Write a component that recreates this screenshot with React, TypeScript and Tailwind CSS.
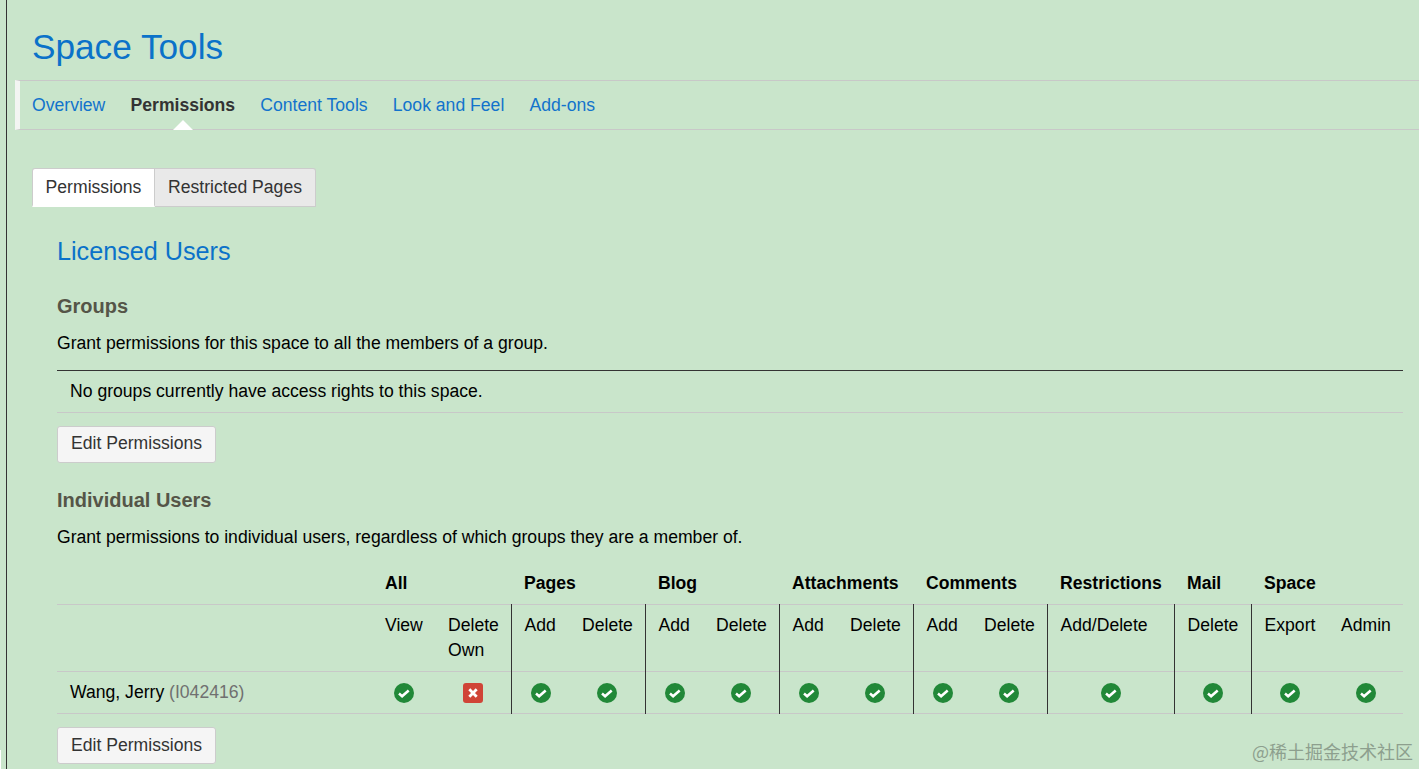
const Check = () => (
  <svg width="20" height="20" viewBox="0 0 20 20" className="mx-auto block">
    <circle cx="10" cy="10" r="10" fill="#218838" />
    <path d="M5 10.6l3.1 2.6 6.6-5.6" fill="none" stroke="#fff" strokeWidth="2.6" />
  </svg>
);
const Cross = () => (
  <svg width="20" height="20" viewBox="0 0 20 20" className="mx-auto block">
    <rect width="20" height="20" rx="3" fill="#d04437" />
    <path d="M6.3 6.3l7.4 7.4M13.7 6.3l-7.4 7.4" fill="none" stroke="#fff" strokeWidth="2.8" />
  </svg>
);

const headers: [string, number][] = [
  ["All", 2],
  ["Pages", 2],
  ["Blog", 2],
  ["Attachments", 2],
  ["Comments", 2],
  ["Restrictions", 1],
  ["Mail", 1],
  ["Space", 2],
];
const widths = [315, 63, 76, 58, 76, 58, 76, 58, 76, 58, 76, 127, 77, 77, 75];
const subs = ["View", "Delete Own", "Add", "Delete", "Add", "Delete", "Add", "Delete", "Add", "Delete", "Add/Delete", "Delete", "Export", "Admin"];
const leftBorder = new Set([2, 4, 6, 8, 10, 11, 12]);

const EditButton = ({ lower }: { lower?: boolean }) => (
  <button className={`block h-[37px] w-[159px] rounded-[3px] border border-[#cccccc] bg-[#f5f5f5] text-[17.6px] text-[#333333] ${lower ? "pb-0" : "pb-[3px]"}`}>Edit Permissions</button>
);

export default function App() {
  return (
    <div className="relative flex h-[769px] w-[1419px] overflow-hidden bg-[#c9e5cb] font-['Liberation_Sans',Arial,sans-serif] text-[17.6px] leading-[24px] text-black">
      <div className="h-full w-[7px] shrink-0 border-r border-[#333333]" />
      <main className="min-w-0 flex-1 pl-2">
        <h1 className="h-[80px] pt-[27px] pl-[17px] text-[35.2px] leading-[40px] font-normal text-[#0b72c9]">Space Tools</h1>
        <nav className="flex h-[50px] items-center gap-[25.2px] border-y border-[#c8c8c8] pl-[12px] border-l-[5px] border-l-[#f3f5f3] text-[#1273cc]">
          <a>Overview</a>
          <a className="relative flex h-full items-center font-bold text-[#333333]">
            Permissions
            <span className="absolute bottom-[-1px] left-[42px] h-0 w-0 border-x-[10px] border-b-[10px] border-x-transparent border-b-white" />
          </a>
          <a>Content Tools</a>
          <a>Look and Feel</a>
          <a>Add-ons</a>
        </nav>
        <div className="ml-[17px] mt-[38px] flex h-[39px] w-fit">
          <div className="flex w-[123px] items-center justify-center rounded-tl-[3px] border-x border-t border-[#cccccc] border-b-2 border-b-white bg-white text-[#333333]">Permissions</div>
          <div className="flex w-[161px] items-center justify-center rounded-tr-[3px] border-y border-r border-[#cccccc] bg-[#e9e9e9] pb-[1px] text-[#333333]">Restricted Pages</div>
        </div>
        <section className="ml-[42px] mr-[16px]">
          <h2 className="mt-[28px] text-[25.2px] leading-[32px] font-normal text-[#0b72c9]">Licensed Users</h2>
          <h3 className="mt-[25px] text-[20px] leading-[28px] font-bold text-[#555548]">Groups</h3>
          <p className="mt-[11px]">Grant permissions for this space to all the members of a group.</p>
          <div className="mt-[15px] flex h-[43px] items-center border-y border-t-[#333333] border-b-[#c8c8c8] pb-[1px] pl-[13px]">No groups currently have access rights to this space.</div>
          <div className="mt-[13px]"><EditButton /></div>
          <h3 className="mt-[23px] text-[20px] leading-[28px] font-bold text-[#555548]">Individual Users</h3>
          <p className="mt-[11px]">Grant permissions to individual users, regardless of which groups they are a member of.</p>
          <table className="mt-[15px] w-[1346px] table-fixed border-collapse">
            <colgroup>
              {widths.map((w, i) => (
                <col key={i} style={{ width: w }} />
              ))}
            </colgroup>
            <thead>
              <tr className="h-[40px] border-b border-[#c8c8c8]">
                <th />
                {headers.map(([h, span]) => (
                  <th key={h} colSpan={span} className="pb-[2px] pl-[13px] text-left font-bold whitespace-nowrap">{h}</th>
                ))}
              </tr>
            </thead>
            <tbody>
              <tr className="h-[67px] border-b border-[#c8c8c8]">
                <td />
                {subs.map((s, i) => (
                  <td key={i} className={`pl-[13px] pt-[8px] align-top leading-[25px] ${leftBorder.has(i) ? "border-l border-l-[#333333]" : ""}`}>{s}</td>
                ))}
              </tr>
              <tr className="h-[42px] border-b border-[#c8c8c8]">
                <td className="pl-[13px] whitespace-nowrap">Wang, Jerry <span className="text-[#707070]">(I042416)</span></td>
                {subs.map((_, i) => (
                  <td key={i} className={`pt-[2px] ${leftBorder.has(i) ? "border-l border-l-[#333333]" : ""} ${i >= 2 && i < 10 ? "pl-[1px]" : ""}`}>{i === 1 ? <Cross /> : <Check />}</td>
                ))}
              </tr>
            </tbody>
          </table>
          <div className="mt-[13px]"><EditButton lower /></div>
        </section>
      </main>
      <div className="absolute bottom-[6px] right-[6px] font-['Noto_Sans_CJK_SC',sans-serif] text-[18px] leading-[24px] text-[#8d9f8e]">@稀土掘金技术社区</div>
      <div className="absolute bottom-0 left-0 h-[19px] w-[1px] bg-white" />
    </div>
  );
}
